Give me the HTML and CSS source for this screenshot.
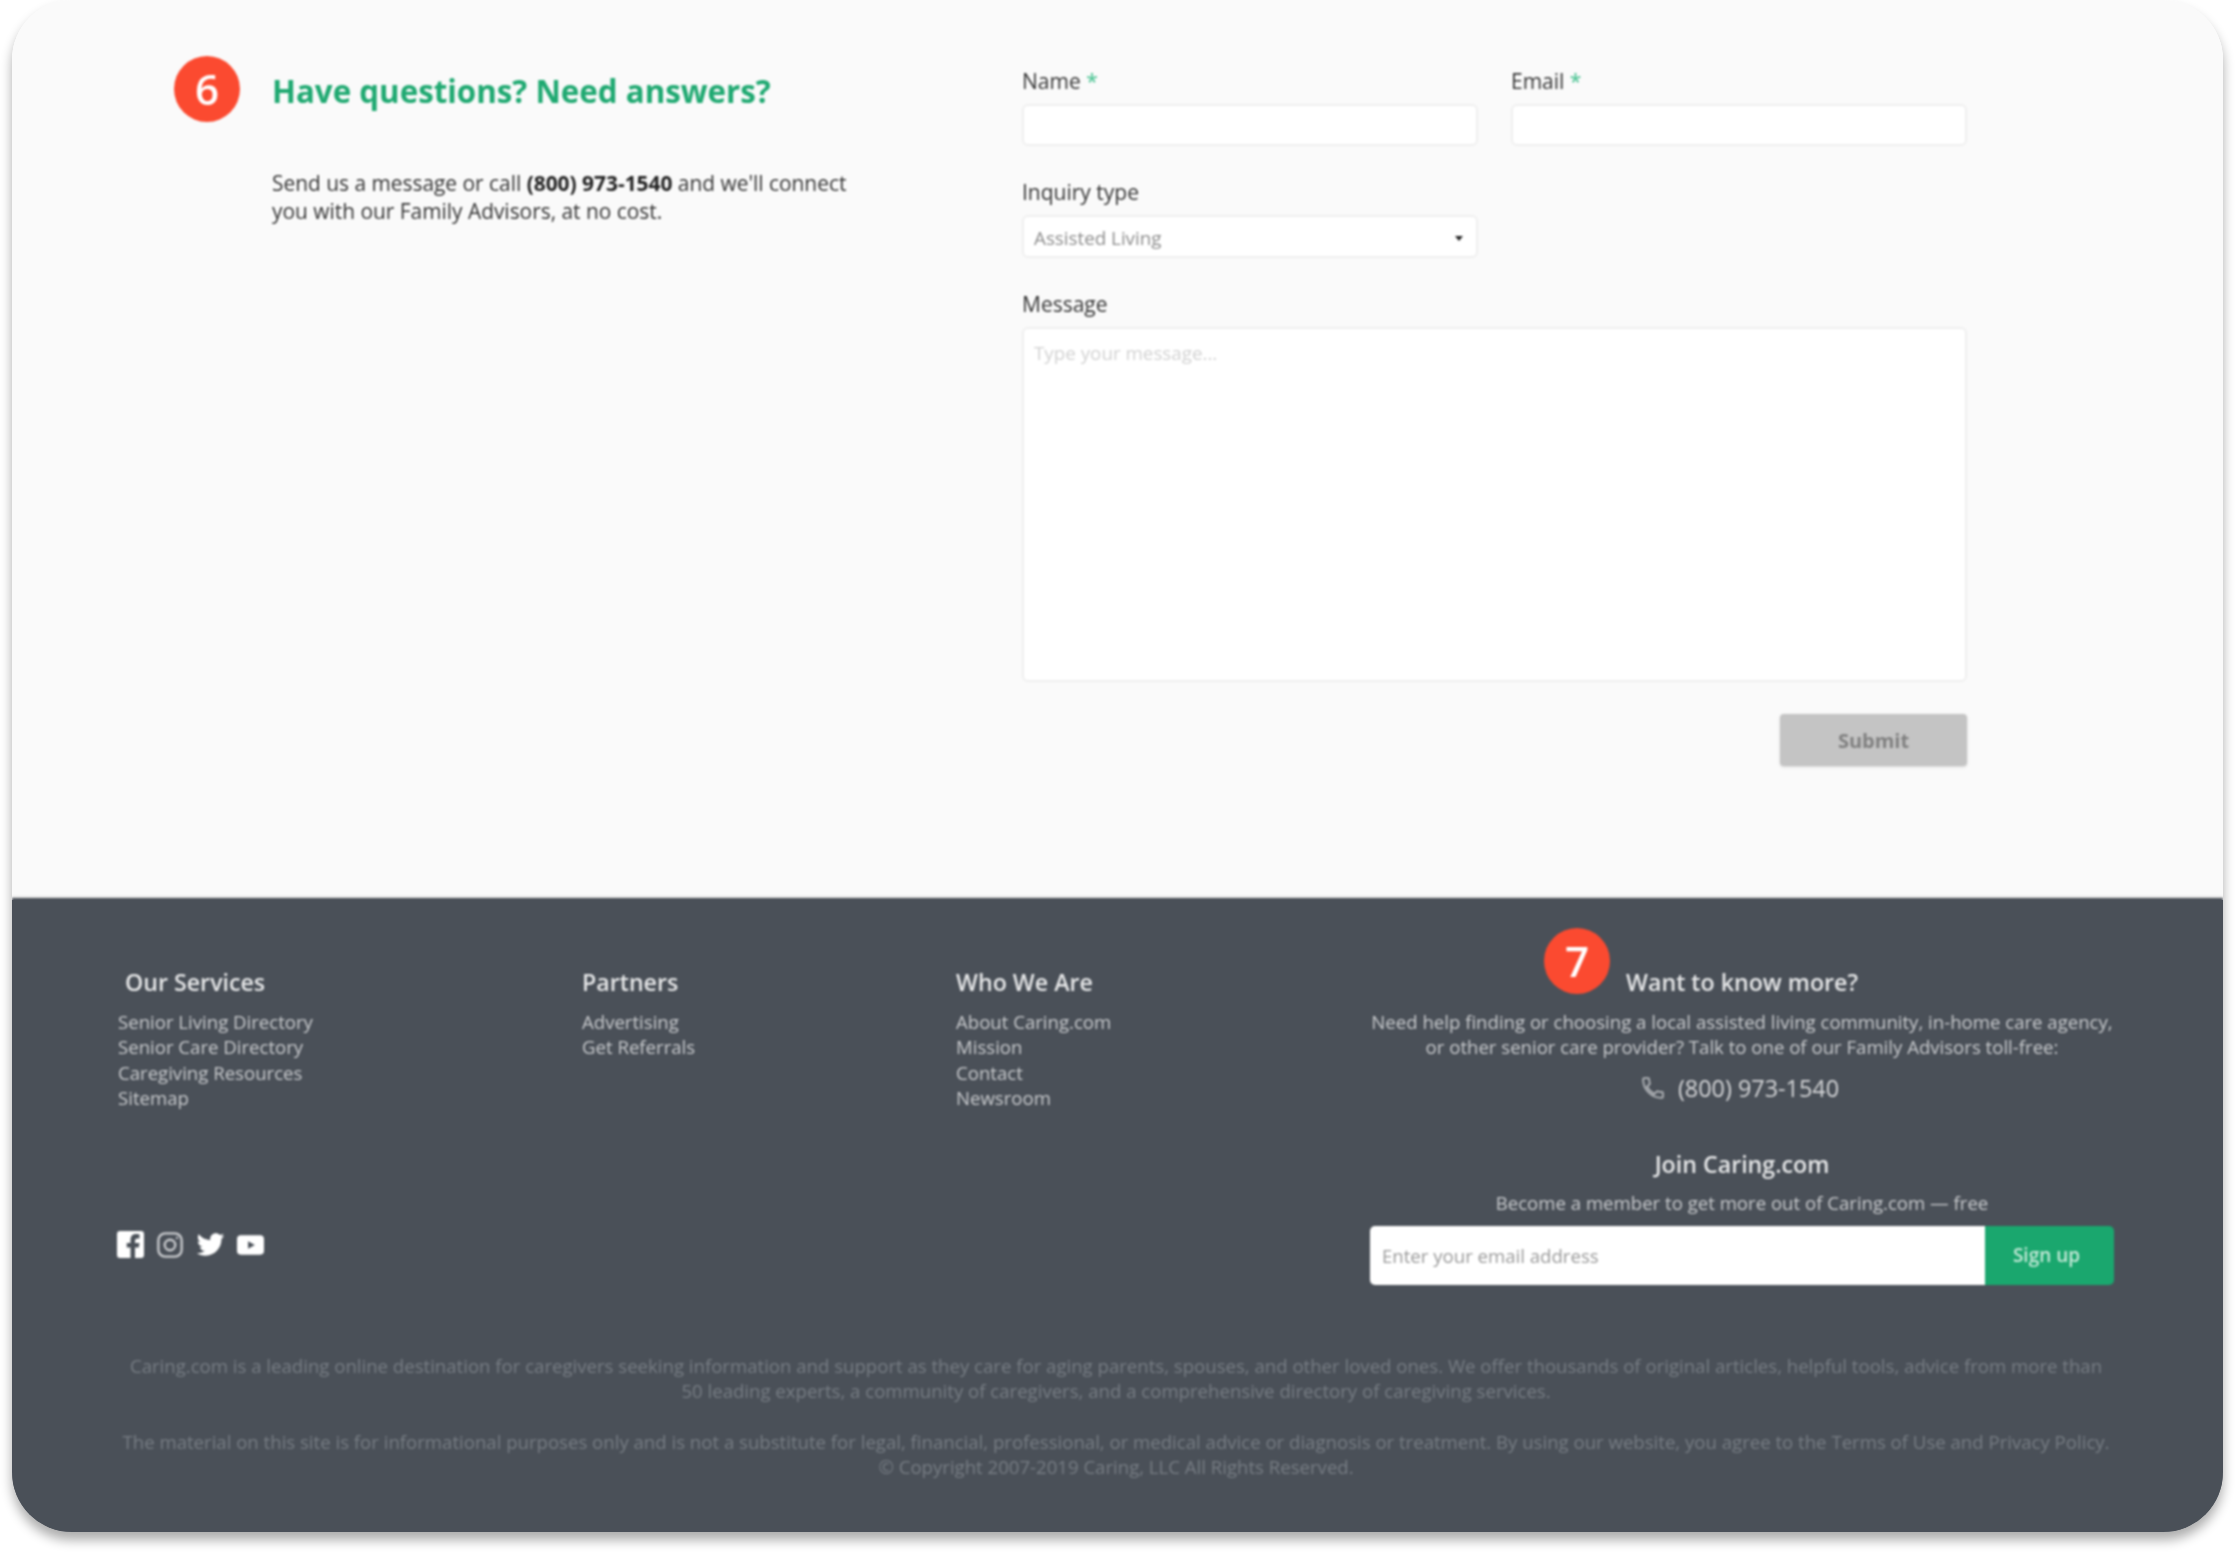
FILE: index.html
```html
<!DOCTYPE html>
<html lang="en">
<head>
    <meta charset="UTF-8">
    <meta name="viewport" content="width=device-width, initial-scale=1.0">
    <title>Caring.com Contact</title>
    <link rel="stylesheet" href="styles.css">
</head>
<body>
    <div class="frame">
        <div class="frame-inner">
            <section class="contact">
                <div class="contact-intro">
                    <div class="contact-title">
                        <span class="badge">6</span>
                        <h2>Have questions? Need answers?</h2>
                    </div>
                    <p>Send us a message or call <strong>(800) 973-1540</strong> and we'll connect you with our Family Advisors, at no cost.</p>
                </div>
                <form class="contact-form">
                    <div class="field">
                        <label for="name">Name <span class="req">*</span></label>
                        <input type="text" id="name">
                    </div>
                    <div class="field">
                        <label for="email">Email <span class="req">*</span></label>
                        <input type="text" id="email">
                    </div>
                    <div class="field">
                        <label for="inquiry">Inquiry type</label>
                        <div class="select-wrap">
                            <select id="inquiry">
                                <option>Assisted Living</option>
                            </select>
                        </div>
                    </div>
                    <div class="field field-wide">
                        <label for="message">Message</label>
                        <textarea id="message" placeholder="Type your message..."></textarea>
                    </div>
                    <div class="form-actions">
                        <button type="button" class="submit">Submit</button>
                    </div>
                </form>
            </section>

            <footer>
                <div class="footer-top">
                    <div class="links">
                        <h4 class="links-indent">Our Services</h4>
                        <a href="#">Senior Living Directory</a>
                        <a href="#">Senior Care Directory</a>
                        <a href="#">Caregiving Resources</a>
                        <a href="#">Sitemap</a>
                    </div>
                    <div class="links">
                        <h4>Partners</h4>
                        <a href="#">Advertising</a>
                        <a href="#">Get Referrals</a>
                    </div>
                    <div class="links">
                        <h4>Who We Are</h4>
                        <a href="#">About Caring.com</a>
                        <a href="#">Mission</a>
                        <a href="#">Contact</a>
                        <a href="#">Newsroom</a>
                    </div>
                    <div class="more">
                        <h4 class="more-title"><span class="badge badge-over">7</span>Want to know more?</h4>
                        <p>Need help finding or choosing a local assisted living community, in-home care agency, or other senior care provider? Talk to one of our Family Advisors toll-free:</p>
                        <div class="phone">
                            <svg width="22" height="22" viewBox="2 2 20 20" fill="none" stroke="#b4b7bb" stroke-width="1.6"><path d="M6.6 10.8c1.4 2.8 3.8 5.1 6.6 6.6l2.2-2.2c.3-.3.7-.4 1-.2 1.1.4 2.3.6 3.6.6.6 0 1 .4 1 1V20c0 .6-.4 1-1 1C10.6 21 3 13.4 3 4c0-.6.4-1 1-1h3.5c.6 0 1 .4 1 1 0 1.3.2 2.5.6 3.6.1.3 0 .7-.2 1z"/></svg>
                            <span>(800) 973-1540</span>
                        </div>
                        <h4 class="join-title">Join Caring.com</h4>
                        <p class="join-text">Become a member to get more out of Caring.com — free</p>
                        <div class="signup">
                            <input type="text" placeholder="Enter your email address">
                            <button type="button">Sign up</button>
                        </div>
                    </div>
                    <div class="social">
                        <svg width="27" height="27" viewBox="3 3 18 18" fill="#fff"><path d="M5 3h14a2 2 0 0 1 2 2v14a2 2 0 0 1-2 2h-4v-7h2.5l.5-3h-3V9.5c0-.8.4-1.5 1.6-1.5H18V5.2s-1-.2-2.4-.2C13.2 5 12 6.5 12 9v2H9.5v3H12v7H5a2 2 0 0 1-2-2V5a2 2 0 0 1 2-2z"/></svg>
                        <svg width="28" height="28" viewBox="0 0 24 24" fill="none" stroke="#c9cbce" stroke-width="2"><rect x="2" y="2" width="20" height="20" rx="6"/><circle cx="12" cy="12" r="4.5"/><circle cx="18" cy="6" r="1" fill="#c9cbce" stroke="none"/></svg>
                        <svg width="29" height="25" viewBox="1 3 22 19" fill="#fff"><path d="M22.46 6c-.77.35-1.6.58-2.46.69.88-.53 1.56-1.37 1.88-2.38-.83.5-1.75.85-2.72 1.05C18.37 4.5 17.26 4 16 4c-2.35 0-4.27 1.92-4.27 4.29 0 .34.04.67.11.98C8.28 9.09 5.11 7.38 3 4.79c-.37.63-.58 1.37-.58 2.15 0 1.49.75 2.81 1.91 3.56-.71 0-1.37-.2-1.95-.5v.03c0 2.08 1.48 3.82 3.44 4.21a4.22 4.22 0 0 1-1.93.07 4.28 4.28 0 0 0 4 2.98 8.521 8.521 0 0 1-5.33 1.84c-.34 0-.68-.02-1.02-.06C3.44 20.29 5.7 21 8.12 21 16 21 20.33 14.46 20.33 8.79c0-.19 0-.37-.01-.56.84-.6 1.56-1.36 2.14-2.23z"/></svg>
                        <svg width="27" height="20" viewBox="0 0 28 20" fill="#fff"><path fill-rule="evenodd" d="M4 0h20a4 4 0 0 1 4 4v12a4 4 0 0 1-4 4H4a4 4 0 0 1-4-4V4a4 4 0 0 1 4-4zm7.5 6v8l7-4z"/></svg>
                    </div>
                </div>
                <div class="legal">
                    <p>Caring.com is a leading online destination for caregivers seeking information and support as they care for aging parents, spouses, and other loved ones. We offer thousands of original articles, helpful tools, advice from more than 50 leading experts, a community of caregivers, and a comprehensive directory of caregiving services.</p>
                    <p>The material on this site is for informational purposes only and is not a substitute for legal, financial, professional, or medical advice or diagnosis or treatment. By using our website, you agree to the Terms of Use and Privacy Policy.<br>© Copyright 2007-2019 Caring, LLC All Rights Reserved.</p>
                </div>
            </footer>
        </div>
    </div>
</body>
</html>
```

FILE: styles.css
```css
body {
    margin: 0;
    padding-bottom: 25px;
    background-color: #fff;
    font-family: "Open Sans", Arial, sans-serif;
    color: #333;
}
.frame {
    width: 2211px;
    height: 1532px;
    margin-left: 12px;
    border-radius: 60px;
    overflow: hidden;
    background: linear-gradient(#fafafa 900px, #4a5058 900px);
    box-shadow: 0 8px 12px rgba(0, 0, 0, 0.33);
}
.frame-inner {
    filter: blur(1px);
}
.badge {
    flex: none;
    width: 66px;
    height: 66px;
    border-radius: 50%;
    background-color: #fb4a30;
    color: #fff;
    font-size: 42px;
    font-weight: 600;
    line-height: 66px;
    text-align: center;
}

/* Contact section */
.contact {
    display: flex;
    height: 898px;
    box-sizing: border-box;
    border-bottom: 2px solid #e6e6e6;
    padding-left: 162px;
    background-color: #fafafa;
}
.contact-intro {
    width: 848px;
    padding-top: 56px;
}
.contact-title {
    display: flex;
    align-items: center;
    gap: 32px;
}
.contact-title h2 {
    margin: 3px 0 0;
    color: #1fa971;
    font-size: 31.3px;
    font-weight: 700;
}
.contact-intro p {
    width: 590px;
    margin: 47px 0 0 98px;
    font-size: 20.9px;
    line-height: 28px;
}
.contact-intro strong {
    color: #222;
}
.contact-form {
    display: grid;
    grid-template-columns: 456px 456px;
    grid-auto-rows: min-content;
    column-gap: 33px;
    row-gap: 32px;
    width: 945px;
    padding-top: 67px;
}
.field label {
    display: block;
    height: 28px;
    margin-bottom: 9px;
    font-size: 21px;
    line-height: 28px;
}
.req {
    color: #3fc08c;
}
.field input,
.field select,
.field textarea {
    display: block;
    width: 100%;
    box-sizing: border-box;
    border: 2px solid #efefef;
    border-radius: 6px;
    background-color: #fff;
    font-family: inherit;
}
.field input {
    height: 42px;
}
.field-wide {
    grid-column: 1 / 3;
}
.select-wrap {
    position: relative;
}
.select-wrap::after {
    content: "";
    position: absolute;
    top: 21px;
    right: 15px;
    border: 4px solid transparent;
    border-top: 5px solid #222;
    border-bottom: none;
}
.field select {
    height: 43px;
    padding: 2px 10px 0;
    appearance: none;
    color: #8c8c8c;
    font-size: 18.8px;
}
.field textarea {
    height: 355px;
    padding: 11px 10px;
    resize: none;
    font-size: 18.8px;
}
.field textarea::placeholder {
    color: #d2d2d2;
}
.form-actions {
    grid-column: 1 / 3;
    display: flex;
    justify-content: flex-end;
}
.submit {
    width: 187px;
    height: 52px;
    border: none;
    border-radius: 4px;
    background-color: #c4c4c4;
    box-shadow: 0 1px 3px rgba(0, 0, 0, 0.15);
    color: #808080;
    font-family: inherit;
    font-size: 20px;
    font-weight: 700;
}

/* Footer */
footer {
    height: 634px;
    box-sizing: border-box;
    padding: 0 0 0 106px;
    background-color: #4a5058;
    color: #c8cacd;
}
.footer-top {
    display: grid;
    grid-template-columns: 464px 374px 414px 744px;
    grid-template-rows: 238px 79px;
    padding-top: 70px;
}
footer h4 {
    margin: 0;
    color: #e6e7e8;
    font-size: 23.2px;
    font-weight: 600;
    line-height: 28px;
}
.links h4 {
    margin-bottom: 13px;
}
.links-indent {
    padding-left: 7px;
}
.links a {
    display: block;
    color: #c8cacd;
    font-size: 18.6px;
    line-height: 25.3px;
    text-decoration: none;
}
.more {
    grid-column: 4;
    grid-row: 1 / 3;
    text-align: center;
}
.more p {
    margin: 0;
    font-size: 18.6px;
    line-height: 25.3px;
}
.more-title {
    position: relative;
    margin-bottom: 13px !important;
}
.badge-over {
    position: absolute;
    top: -40px;
    left: 174px;
}
.phone {
    display: flex;
    align-items: center;
    justify-content: center;
    gap: 14px;
    margin: 14px 3px 0 0;
    font-size: 23.4px;
    line-height: 28px;
    color: #d6d7d9;
}
.join-title {
    margin-top: 48px !important;
}
.join-text {
    margin-top: 12px !important;
}
.signup {
    display: flex;
    height: 59px;
    margin-top: 11px;
    border-radius: 5px;
    overflow: hidden;
}
.signup input {
    flex: 1;
    min-width: 0;
    padding: 0 12px;
    border: none;
    background-color: #fff;
    font-family: inherit;
    font-size: 18.6px;
}
.signup input::placeholder {
    color: #999;
}
.signup button {
    width: 129px;
    padding: 0 6px 0 0;
    border: none;
    background-color: #1aa76e;
    color: #c6ead9;
    font-family: inherit;
    font-size: 19px;
    font-weight: 600;
}
.social {
    grid-column: 1;
    grid-row: 2;
    display: flex;
    align-items: center;
    gap: 12px;
    margin: 0 0 2px -1px;
}
.legal {
    width: 1990px;
    margin: 68px 0 0 3px;
    color: #777d84;
    font-size: 18.6px;
    line-height: 25.3px;
    text-align: center;
}
.legal p {
    margin: 0 0 25px;
}
```
